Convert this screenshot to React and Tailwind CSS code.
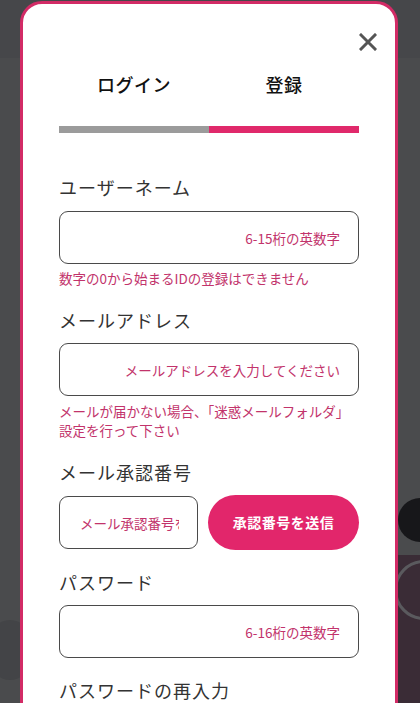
import React, { useState } from 'react';

const font = { fontFamily: '"Noto Sans CJK JP", "Noto Sans", sans-serif' };

function Field({ placeholder, className = '' }) {
  return (
    <input
      type="text"
      placeholder={placeholder}
      className={`h-[53px] rounded-[9px] border border-[#4a4a4a] bg-white pl-5 pr-[18px] text-right text-[13.5px] text-[#333] outline-none placeholder:text-[#c2336b] ${className}`}
    />
  );
}

function Label({ children }) {
  return <div className="text-[18px] leading-[26px] tracking-[1px] text-[#333]">{children}</div>;
}

export default function App() {
  const [tab, setTab] = useState('register');

  return (
    <div className="relative h-[703px] w-[420px] overflow-hidden bg-[#4a4b4d]" style={font}>
      {/* ── blurred page behind the overlay ── */}
      <div className="absolute left-0 top-0 h-[58px] w-full bg-[#46474a]" />
      <div className="absolute right-[-22px] top-[498px] h-[44px] w-[44px] rounded-full bg-[#17171a]" />
      <div className="absolute right-[-30px] top-[555px] h-[148px] w-[60px] bg-[#3a2c36]" />
      <div className="absolute right-[-34px] top-[560px] h-[60px] w-[60px] rounded-full border-[3px] border-[#5a5a5e]" />
      <div className="absolute left-[-10px] top-[620px] h-[60px] w-[40px] rounded-full bg-[#434447]" />

      {/* ── modal ── */}
      <div className="absolute left-[20px] top-[1px] h-[760px] w-[378px] rounded-[22px] border-[3px] border-[#d22b66] bg-white">
        <button className="absolute right-[14px] top-[25px] p-1 text-[#555]" aria-label="close">
          <svg width="18" height="18" viewBox="0 0 18 18">
            <path d="M2 2L16 16M16 2L2 16" stroke="currentColor" strokeWidth="3" strokeLinecap="square" />
          </svg>
        </button>

        <div className="flex flex-col px-[36px] pt-[67px]">
          {/* tabs */}
          <div className="flex flex-col gap-[29px]">
            <div className="flex">
              {[
                { key: 'login', label: 'ログイン' },
                { key: 'register', label: '登録' },
              ].map(t => (
                <button
                  key={t.key}
                  onClick={() => setTab(t.key)}
                  className="flex-1 text-center text-[18px] font-medium leading-[26px] tracking-[0.5px] text-[#111]"
                >
                  {t.label}
                </button>
              ))}
            </div>
            <div className="flex h-[7px]">
              <div className={`flex-1 ${tab === 'login' ? 'bg-[#e0296b]' : 'bg-[#9b9b9b]'}`} />
              <div className={`flex-1 ${tab === 'register' ? 'bg-[#e0296b]' : 'bg-[#9b9b9b]'}`} />
            </div>
          </div>

          <div className="mt-[41px] flex flex-col gap-[19px]">
            {/* username */}
            <div className="flex flex-col">
              <Label>ユーザーネーム</Label>
              <Field placeholder="6-15桁の英数字" className="mt-[11px] w-full" />
              <p className="mt-[4px] text-[13.5px] leading-[20px] text-[#c2336b]">数字の0から始まるIDの登録はできません</p>
            </div>

            {/* email */}
            <div className="flex flex-col">
              <Label>メールアドレス</Label>
              <Field placeholder="メールアドレスを入力してください" className="mt-[10px] w-full" />
              <p className="mt-[6px] text-[13.5px] leading-[19px] text-[#c2336b]">
                メールが届かない場合、「迷惑メールフォルダ」
                <br />
                設定を行って下さい
              </p>
            </div>

            {/* verification code */}
            <div className="flex flex-col gap-[10px]">
              <Label>メール承認番号</Label>
              <div className="flex h-[55px] items-center gap-[10px]">
                <Field placeholder="メール承認番号を入力" className="w-[139px] min-w-0 shrink-0" />
                <button className="h-[55px] flex-1 rounded-full bg-[#e2266b] text-[14px] font-bold tracking-[0.5px] text-white">
                  承認番号を送信
                </button>
              </div>
            </div>

            {/* password */}
            <div className="flex flex-col gap-[10px]">
              <Label>パスワード</Label>
              <Field placeholder="6-16桁の英数字" className="w-full" />
            </div>

            <div className="flex flex-col gap-[10px]">
              <Label>パスワードの再入力</Label>
              <Field placeholder="6-16桁の英数字" className="w-full" />
            </div>
          </div>
        </div>
      </div>
    </div>
  );
}
